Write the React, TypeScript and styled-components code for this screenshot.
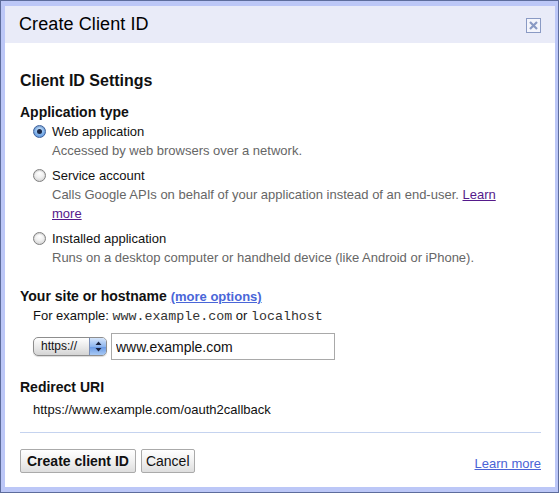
import React from 'react';
import styled, { createGlobalStyle, css } from 'styled-components';

const GlobalStyle = createGlobalStyle`
html, body {
  margin: 0;
  padding: 0;
  background: #ffffff;
}
body {
  font-family: "Liberation Sans", Arial, sans-serif;
}
`;

const options = [
  {
    label: 'Web application',
    desc: 'Accessed by web browsers over a network.',
    checked: true,
  },
  {
    label: 'Service account',
    desc: 'Calls Google APIs on behalf of your application instead of an end-user.',
    learn: true,
    checked: false,
  },
  {
    label: 'Installed application',
    desc: 'Runs on a desktop computer or handheld device (like Android or iPhone).',
    checked: false,
  },
];

const App: React.FC = () => {
  return (
    <>
      <GlobalStyle />
      <Frame>
        <Dialog>
          <Header>
            <Title>Create Client ID</Title>
            <CloseBox aria-label="close">
              <svg width="11" height="11" viewBox="0 0 11 11">
                <path d="M2 2 L9 9 M9 2 L2 9" stroke="#8a9ac4" strokeWidth="2.2" />
              </svg>
            </CloseBox>
          </Header>
          <Body>
            <SectionTitle>Client ID Settings</SectionTitle>
            <Label $top={12}>Application type</Label>
            {options.map((o, i) => (
              <Option key={o.label} $first={i === 0}>
                <Radio $checked={o.checked} />
                <OptionText>
                  <OptionLabel>{o.label}</OptionLabel>
                  <Desc>
                    {o.desc}
                    {o.learn && (
                      <>
                        {' '}
                        <Visited href="#">Learn more</Visited>
                      </>
                    )}
                  </Desc>
                </OptionText>
              </Option>
            ))}
            <Label $top={20}>
              Your site or hostname <MoreLink href="#">(more options)</MoreLink>
            </Label>
            <Example>
              For example: <Mono>www.example.com</Mono> or <Mono>localhost</Mono>
            </Example>
            <HostRow>
              <Select>
                <SelectText>https://</SelectText>
                <SelectArrows>
                  <svg width="7" height="11" viewBox="0 0 7 11">
                    <path d="M3.5 0.5 L6.5 4 L0.5 4 Z M0.5 7 L6.5 7 L3.5 10.5 Z" fill="#1a2340" />
                  </svg>
                </SelectArrows>
              </Select>
              <HostInput defaultValue="www.example.com" />
            </HostRow>
            <Label $top={18}>Redirect URI</Label>
            <Redirect>https://www.example.com/oauth2callback</Redirect>
            <Rule />
            <Footer>
              <Buttons>
                <Button $bold>Create client ID</Button>
                <Button>Cancel</Button>
              </Buttons>
              <LearnLink href="#">Learn more</LearnLink>
            </Footer>
          </Body>
        </Dialog>
      </Frame>
    </>
  );
};

const Frame = styled.div`
width: 559px;
height: 493px;
box-sizing: border-box;
border: 1px solid #5d6c9c;
background: #bcc7f7;
padding: 5px 3px 5px 4px;
`;

const Dialog = styled.div`
background: #ffffff;
height: 100%;
display: flex;
flex-direction: column;
`;

const Header = styled.div`
height: 37px;
background: #e9ebf8;
display: flex;
align-items: center;
justify-content: space-between;
padding: 0 14px 0 14px;
`;

const Title = styled.div`
font-size: 18px;
color: #000;
letter-spacing: 0.1px;
`;

const CloseBox = styled.div`
width: 13px;
height: 13px;
border: 1px solid #8a9ac4;
background: #f4f5fc;
display: flex;
align-items: center;
justify-content: center;
margin-top: 1px;
`;

const Body = styled.div`
padding: 0 14px 0 15px;
display: flex;
flex-direction: column;
`;

const SectionTitle = styled.div`
margin-top: 28px;
font-size: 16px;
line-height: 20px;
font-weight: bold;
color: #111;
`;

const Label = styled.div<{ $top?: number }>`
margin-top: ${(p) => p.$top ?? 13}px;
font-size: 14px;
line-height: 18px;
font-weight: bold;
color: #111;
`;

const Option = styled.div<{ $first?: boolean }>`
display: flex;
align-items: flex-start;
gap: 6px;
padding-left: 13px;
margin-top: ${(p) => (p.$first ? 1 : 6)}px;
`;

const Radio = styled.span<{ $checked?: boolean }>`
flex: none;
width: 11px;
height: 11px;
margin-top: 3px;
border-radius: 50%;
border: 1px solid #7f7f7f;
background: radial-gradient(circle at 50% 30%, #ffffff 0%, #f0f0f0 45%, #c9c9c9 100%);
box-shadow: inset 0 1px 1px rgba(0, 0, 0, 0.15);
position: relative;
${(p) =>
  p.$checked &&
  css`
    border-color: #3d5f9a;
    background: radial-gradient(circle at 50% 35%, #cfe4fb 0%, #86b6ec 50%, #4a85d4 100%);
    &::after {
      content: '';
      position: absolute;
      left: 3px;
      top: 3px;
      width: 5px;
      height: 5px;
      border-radius: 50%;
      background: #1b2a4a;
    }
  `}
`;

const OptionText = styled.div`
display: flex;
flex-direction: column;
`;

const OptionLabel = styled.div`
font-size: 13px;
line-height: 19px;
color: #111;
`;

const Desc = styled.div`
font-size: 13px;
line-height: 19px;
color: #666;
max-width: 450px;
`;

const Visited = styled.a`
color: #551a8b;
text-decoration: underline;
`;

const MoreLink = styled.a`
color: #4a66d8;
text-decoration: underline;
font-size: 13px;
`;

const Example = styled.div`
margin-top: 0;
padding-left: 13px;
font-size: 13px;
line-height: 19px;
color: #111;
`;

const Mono = styled.span`
font-family: "Liberation Mono", "Courier New", monospace;
font-size: 13.3px;
color: #333;
`;

const HostRow = styled.div`
margin-top: 7px;
padding-left: 13px;
display: flex;
align-items: center;
gap: 4px;
`;

const Select = styled.div`
width: 72px;
height: 17px;
border: 1px solid #8d8d8d;
border-radius: 5px;
overflow: hidden;
display: flex;
background: linear-gradient(#ffffff, #e6e6e6 60%, #d4d4d4);
box-shadow: 0 1px 1px rgba(0, 0, 0, 0.15);
`;

const SelectText = styled.div`
flex: 1;
font-size: 12px;
line-height: 17px;
padding-left: 7px;
color: #111;
`;

const SelectArrows = styled.div`
width: 16px;
display: flex;
align-items: center;
justify-content: center;
border-left: 1px solid #7a8fb8;
background: linear-gradient(#d6e6fb, #8fb6ee 50%, #6c9ce6 55%, #a8c9f4);
`;

const HostInput = styled.input`
width: 224px;
height: 27px;
box-sizing: border-box;
border: 1px solid #a9a9a9;
padding: 0 4px;
font-family: "Liberation Sans", Arial, sans-serif;
font-size: 14px;
color: #111;
outline: none;
`;

const Redirect = styled.div`
margin-top: 4px;
padding-left: 13px;
font-size: 13px;
line-height: 19px;
color: #111;
`;

const Rule = styled.div`
margin-top: 13px;
height: 1px;
background: #c5d3ef;
`;

const Footer = styled.div`
margin-top: 16px;
display: flex;
align-items: flex-end;
justify-content: space-between;
`;

const Buttons = styled.div`
display: flex;
gap: 5px;
`;

const Button = styled.button<{ $bold?: boolean }>`
height: 24px;
padding: 0 ${(p) => (p.$bold ? 6 : 4)}px;
border: 1px solid #aaaaaa;
border-radius: 2px;
background: linear-gradient(#ffffff, #f1f1f1 50%, #dedede);
font-family: "Liberation Sans", Arial, sans-serif;
font-size: 14px;
font-weight: ${(p) => (p.$bold ? 'bold' : 'normal')};
color: #111;
cursor: pointer;
`;

const LearnLink = styled.a`
font-size: 13px;
line-height: 16px;
color: #4a63d6;
text-decoration: underline;
margin-bottom: 1px;
`;

export default App;
